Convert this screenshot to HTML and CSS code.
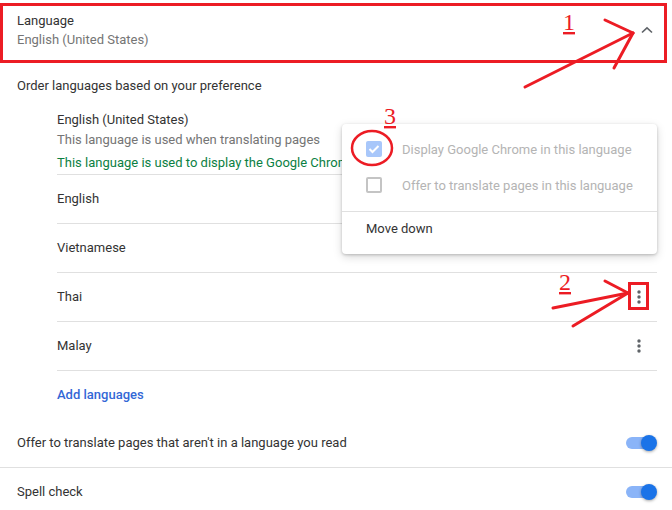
FILE: index.html
```html
<!DOCTYPE html>
<html lang="en">
<head>
<meta charset="utf-8">
<title>Language settings</title>
<link rel="stylesheet" href="styles.css">
</head>
<body>
<div class="page">
  <div class="header">
    <div class="header-text">
      <div class="title">Language</div>
      <div class="subtitle">English (United States)</div>
    </div>
    <svg class="chevron" width="12" height="8" viewBox="0 0 12 8"><path d="M1 6.5 L6 1.8 L11 6.5" fill="none" stroke="#5f6368" stroke-width="1.6"/></svg>
  </div>

  <div class="order-label">Order languages based on your preference</div>

  <div class="lang-list">
    <div class="lang-item">
      <div class="lang-line">English (United States)</div>
      <div class="lang-line note">This language is used when translating pages</div>
      <div class="lang-line ui">This language is used to display the Google Chrome in this language</div>
    </div>
    <div class="lang-row"><span>English</span></div>
    <div class="lang-row"><span>Vietnamese</span></div>
    <div class="lang-row"><span>Thai</span><span class="dots"><svg width="4" height="14" viewBox="0 0 4 14"><circle cx="2" cy="2" r="1.7"/><circle cx="2" cy="7" r="1.7"/><circle cx="2" cy="12" r="1.7"/></svg></span></div>
    <div class="lang-row"><span>Malay</span><span class="dots"><svg width="4" height="14" viewBox="0 0 4 14"><circle cx="2" cy="2" r="1.7"/><circle cx="2" cy="7" r="1.7"/><circle cx="2" cy="12" r="1.7"/></svg></span></div>
    <div class="add-row"><span class="link">Add languages</span></div>
  </div>

  <div class="toggle-row bordered">
    <span>Offer to translate pages that aren't in a language you read</span>
    <span class="toggle"><span class="track"></span><span class="knob"></span></span>
  </div>
  <div class="toggle-row">
    <span>Spell check</span>
    <span class="toggle"><span class="track"></span><span class="knob"></span></span>
  </div>

  <div class="menu">
    <div class="menu-item disabled">
      <span class="checkbox checked"><svg width="12" height="10" viewBox="0 0 12 10"><path d="M1.5 5 L4.5 8 L10.5 2" fill="none" stroke="#fff" stroke-width="2"/></svg></span>
      <span>Display Google Chrome in this language</span>
    </div>
    <div class="menu-item disabled">
      <span class="checkbox"></span>
      <span>Offer to translate pages in this language</span>
    </div>
    <div class="menu-divider"></div>
    <div class="menu-item action">Move down</div>
  </div>

  <svg class="annotations" width="672" height="510" viewBox="0 0 672 510">
    <g fill="none" stroke="#ec1c24" stroke-width="3" stroke-linecap="round">
      <rect x="1.5" y="4.5" width="664" height="57"/>
      <line x1="525" y1="87" x2="633" y2="33"/>
      <line x1="605" y1="20" x2="633" y2="33"/>
      <line x1="614" y1="68" x2="633" y2="33"/>
      <rect x="629.5" y="283.5" width="18" height="25"/>
      <line x1="553" y1="308" x2="628" y2="293"/>
      <line x1="605" y1="281" x2="628" y2="293"/>
      <line x1="573" y1="326" x2="628" y2="293"/>
      <ellipse cx="372" cy="148" rx="20" ry="17" stroke-width="2.5"/>
    </g>
    <g class="num" fill="#ec1c24">
      <text x="563" y="30" text-decoration="underline">1</text>
      <text x="559" y="290" text-decoration="underline">2</text>
      <text x="384" y="124" text-decoration="underline">3</text>
    </g>
  </svg>
</div>
</body>
</html>
```

FILE: styles.css
```css
* { box-sizing: border-box; }

html, body {
  margin: 0;
  padding: 0;
  background: #fff;
}

body {
  font-family: Roboto, "Liberation Sans", Arial, sans-serif;
  font-size: 13px;
  color: #333;
}

.page {
  position: relative;
  width: 672px;
  height: 510px;
  overflow: hidden;
}

.header {
  height: 60px;
  display: flex;
  align-items: center;
  justify-content: space-between;
  padding: 0 19px 0 17px;
}

.header-text .title,
.header-text .subtitle {
  line-height: 19px;
}

.header-text .subtitle {
  color: #757575;
}

.chevron { display: block; }

.order-label {
  margin-top: 16px;
  padding-left: 17px;
  line-height: 20px;
}

.lang-list {
  margin: 0 15px 0 57px;
}

.lang-item {
  padding: 14px 0 1px;
  border-bottom: 1px solid #e0e0e0;
}

.lang-line {
  line-height: 20px;
  white-space: nowrap;
}

.lang-line.note { color: #757575; }

.lang-line.ui {
  color: #0b8043;
  margin-top: 3px;
}

.lang-row {
  height: 49px;
  padding-bottom: 1px;
  border-bottom: 1px solid #e0e0e0;
  display: flex;
  align-items: center;
  justify-content: space-between;
}

.dots {
  width: 20px;
  margin-right: 8px;
  display: flex;
  justify-content: center;
}

.dots svg { display: block; fill: #5f6368; }

.add-row {
  height: 48px;
  padding-bottom: 1px;
  display: flex;
  align-items: center;
}

.link {
  color: #3367d6;
  font-weight: 500;
}

.toggle-row {
  height: 48px;
  padding: 0 15px 1px 17px;
  display: flex;
  align-items: center;
  justify-content: space-between;
}

.toggle-row.bordered {
  height: 49px;
  border-bottom: 1px solid #e0e0e0;
}

.toggle {
  position: relative;
  width: 31px;
  height: 16px;
  display: block;
}

.track {
  position: absolute;
  left: 0;
  top: 2px;
  width: 28px;
  height: 12px;
  border-radius: 6px;
  background: #8ab4f8;
}

.knob {
  position: absolute;
  right: 0;
  top: 0;
  width: 16px;
  height: 16px;
  border-radius: 50%;
  background: #1a73e8;
  box-shadow: 0 1px 3px rgba(0, 0, 0, 0.35);
}

.menu {
  position: absolute;
  left: 342px;
  top: 124px;
  width: 315px;
  height: 130px;
  padding: 7px 0 10px;
  background: #fff;
  border-radius: 4px;
  box-shadow: 0 1px 3px rgba(0, 0, 0, 0.2), 0 3px 10px rgba(0, 0, 0, 0.15);
}

.menu-item {
  height: 36px;
  padding-left: 24px;
  display: flex;
  align-items: center;
}

.menu-item.disabled { color: #b4b4b4; }

.menu-item.action {
  height: 32px;
  color: #333;
}

.checkbox {
  width: 16px;
  height: 16px;
  margin-right: 20px;
  border: 2px solid #c4c4c4;
  border-radius: 2px;
  display: flex;
  align-items: center;
  justify-content: center;
}

.checkbox.checked {
  border: none;
  background: #a8c7fa;
}

.checkbox svg { display: block; }

.menu-divider {
  margin-top: 8px;
  height: 1px;
  background: #e0e0e0;
}

.annotations {
  position: absolute;
  left: 0;
  top: 0;
  pointer-events: none;
}

.num text {
  font-family: "Liberation Serif", "Times New Roman", serif;
  font-size: 24px;
}
```
